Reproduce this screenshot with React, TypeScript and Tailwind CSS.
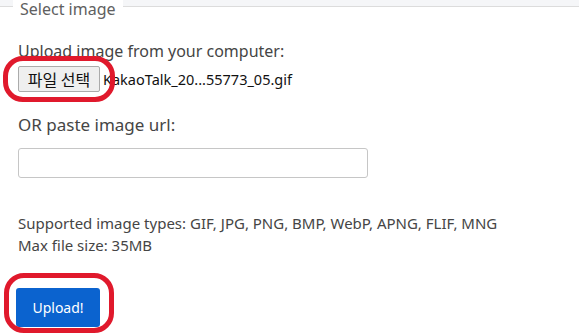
import React from 'react';

export default function App() {
  return (
    <div className="relative w-[579px] h-[335px] overflow-hidden bg-white text-[#454545] font-['Noto_Sans','Noto_Sans_CJK_KR',sans-serif]">
      {/* Fieldset edge */}
      <div className="h-[6px] bg-[#f5f6f8]" />
      <div className="relative border-t border-[#dcdcdc]">
        <div className="absolute left-[13px] top-[-7px] bg-white px-[7px] text-[16px] leading-[18px] text-[#606060]">
          Select image
        </div>
      </div>

      <div className="pl-[18px] pt-[34px]">
        <div className="text-[16px] leading-[20px]">Upload image from your computer:</div>
        <div className="mt-[5px] flex items-center gap-[3px]">
          <button className="w-[82px] h-[26px] border border-[#ababab] rounded-[2px] bg-[#efefef] text-[16px] leading-[20px] text-[#111] font-['Noto_Sans_CJK_KR',sans-serif]">
            파일 선택
          </button>
          <span className="text-[14.5px] leading-[20px] text-[#111]">KakaoTalk_20...55773_05.gif</span>
        </div>

        <div className="mt-[23px] text-[17px] leading-[20px]">OR paste image url:</div>
        <input
          type="text"
          className="mt-[13px] block w-[350px] h-[30px] border border-[#c6c6c6] rounded-[3px] bg-white outline-none"
        />

        <div className="mt-[34px] text-[15px] leading-[22px]">
          <div>Supported image types: GIF, JPG, PNG, BMP, WebP, APNG, FLIF, MNG</div>
          <div>Max file size: 35MB</div>
        </div>

        <button className="mt-[32px] ml-[-2px] w-[84px] h-[39px] rounded-[3px] bg-[#0b63cf] text-white text-[14px] leading-[20px]">
          Upload!
        </button>
      </div>

      {/* Annotation rings drawn over the controls */}
      <div className="absolute left-[3px] top-[56px] w-[112px] h-[46px] rounded-[20px] border-[5px] border-[#e0192c]" />
      <div className="absolute left-[4px] top-[273px] w-[110px] h-[60px] rounded-[20px] border-[5px] border-[#e0192c]" />
    </div>
  );
}
